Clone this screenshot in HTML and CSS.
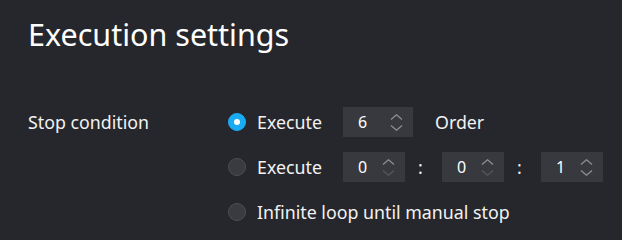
FILE: index.html
```html
<!DOCTYPE html>
<html lang="en">
<head>
  <meta charset="UTF-8">
  <title>Execution settings</title>
  <link rel="stylesheet" href="styles.css">
</head>
<body>

  <div class="panel">
    <h1 class="title">Execution settings</h1>

    <div class="setting">
      <div class="setting-label">Stop condition</div>

      <div class="options">
        <div class="option">
          <span class="radio checked"></span>
          <span class="option-text">Execute</span>
          <div class="spin wide">
            <span class="spin-value">6</span>
            <span class="arrows">
              <svg width="13" height="6" viewBox="0 0 13 6"><path d="M1 5.5 L6.5 0.8 L12 5.5" /></svg>
              <svg width="13" height="6" viewBox="0 0 13 6"><path d="M1 0.5 L6.5 5.2 L12 0.5" /></svg>
            </span>
          </div>
          <span class="after">Order</span>
        </div>

        <div class="option">
          <span class="radio"></span>
          <span class="option-text">Execute</span>
          <div class="spin">
            <span class="spin-value">0</span>
            <span class="arrows">
              <svg width="13" height="6" viewBox="0 0 13 6"><path d="M1 5.5 L6.5 0.8 L12 5.5" /></svg>
              <svg class="off" width="13" height="6" viewBox="0 0 13 6"><path d="M1 0.5 L6.5 5.2 L12 0.5" /></svg>
            </span>
          </div>
          <span class="colon">:</span>
          <div class="spin">
            <span class="spin-value">0</span>
            <span class="arrows">
              <svg width="13" height="6" viewBox="0 0 13 6"><path d="M1 5.5 L6.5 0.8 L12 5.5" /></svg>
              <svg class="off" width="13" height="6" viewBox="0 0 13 6"><path d="M1 0.5 L6.5 5.2 L12 0.5" /></svg>
            </span>
          </div>
          <span class="colon">:</span>
          <div class="spin">
            <span class="spin-value">1</span>
            <span class="arrows">
              <svg width="13" height="6" viewBox="0 0 13 6"><path d="M1 5.5 L6.5 0.8 L12 5.5" /></svg>
              <svg width="13" height="6" viewBox="0 0 13 6"><path d="M1 0.5 L6.5 5.2 L12 0.5" /></svg>
            </span>
          </div>
        </div>

        <div class="option">
          <span class="radio"></span>
          <span class="option-text">Infinite loop until manual stop</span>
        </div>
      </div>
    </div>
  </div>

</body>
</html>
```

FILE: styles.css
```css
body {
  margin: 0;
  background: #26272c;
  color: #ffffff;
  font-family: 'Noto Sans', 'Open Sans', sans-serif;
  height: 240px;
  overflow: hidden;
}
.panel {
  padding: 12px 28px 0 28px;
}
.title {
  margin: 0;
  font-size: 30.5px;
  font-weight: 400;
  line-height: 44px;
  color: #ffffff;
}
.setting {
  display: flex;
  margin-top: 51px;
}
.setting-label {
  flex-shrink: 0;
  width: 200px;
  font-size: 17.8px;
  line-height: 30px;
  color: #f2f2f2;
}
.options {
  display: flex;
  flex-direction: column;
  gap: 15px;
}
.option {
  display: flex;
  align-items: center;
  height: 30px;
  font-size: 17.8px;
  color: #f2f2f2;
}
.radio {
  flex-shrink: 0;
  width: 16px;
  height: 16px;
  border-radius: 50%;
  background: #3a3b40;
  border: 1px solid #4d4e53;
  margin-right: 11px;
  position: relative;
}
.radio.checked {
  background: #1aabf5;
  border-color: #1aabf5;
}
.radio.checked::after {
  content: "";
  position: absolute;
  left: 5px;
  top: 5px;
  width: 6px;
  height: 6px;
  border-radius: 50%;
  background: #ffffff;
}
.option-text {
  min-width: 86px;
}
.spin {
  flex-shrink: 0;
  display: flex;
  align-items: center;
  justify-content: space-between;
  width: 62px;
  height: 30px;
  box-sizing: border-box;
  padding: 0 10px 0 15px;
  background: #38393e;
}
.spin.wide {
  width: 70px;
}
.spin-value {
  font-size: 16px;
  color: #ffffff;
}
.arrows {
  display: flex;
  flex-direction: column;
  gap: 5px;
}
.arrows svg {
  display: block;
  fill: none;
  stroke: #8d8e92;
  stroke-width: 1.3;
}
.arrows svg.off {
  stroke: #56575b;
}
.after {
  margin-left: 22px;
}
.colon {
  flex-shrink: 0;
  width: 37px;
  padding-right: 6px;
  box-sizing: border-box;
  text-align: center;
}
```
